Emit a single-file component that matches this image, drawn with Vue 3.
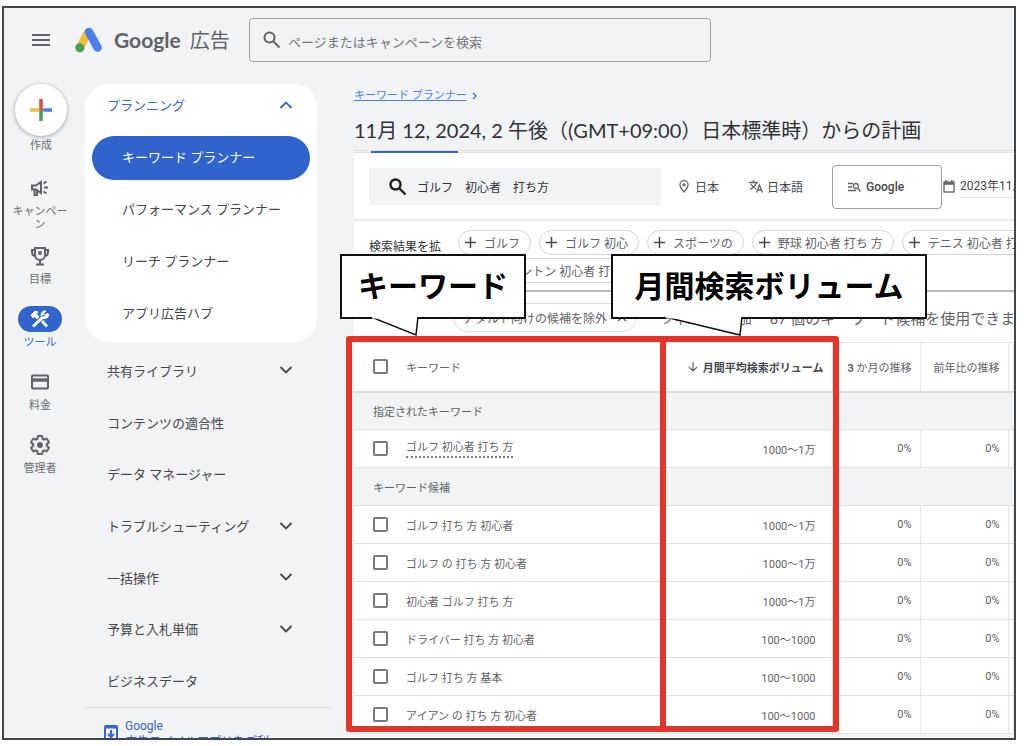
<script setup>
const rail = [
  { id: 'campaign', label: 'キャンペーン' },
  { id: 'goal', label: '目標' },
  { id: 'tools', label: 'ツール', active: true },
  { id: 'billing', label: '料金' },
  { id: 'admin', label: '管理者' },
]
const planning = ['キーワード プランナー', 'パフォーマンス プランナー', 'リーチ プランナー', 'アプリ広告ハブ']
const sections = [
  { label: '共有ライブラリ', more: true },
  { label: 'コンテンツの適合性' },
  { label: 'データ マネージャー' },
  { label: 'トラブルシューティング', more: true },
  { label: '一括操作', more: true },
  { label: '予算と入札単価', more: true },
  { label: 'ビジネスデータ' },
]
const chips = ['ゴルフ', 'ゴルフ 初心', 'スポーツの', '野球 初心者 打ち 方', 'テニス 初心者 打ち 方']
const rows = [
  { section: '指定されたキーワード' },
  { keyword: 'ゴルフ 初心者 打ち 方', volume: '1000～1万', given: true },
  { section: 'キーワード候補' },
  { keyword: 'ゴルフ 打ち 方 初心者', volume: '1000～1万' },
  { keyword: 'ゴルフ の 打ち 方 初心者', volume: '1000～1万' },
  { keyword: '初心者 ゴルフ 打ち 方', volume: '1000～1万' },
  { keyword: 'ドライバー 打ち 方 初心者', volume: '100～1000' },
  { keyword: 'ゴルフ 打ち 方 基本', volume: '100～1000' },
  { keyword: 'アイアン の 打ち 方 初心者', volume: '100～1000' },
]
</script>

<template>
  <div class="page">
    <div class="frame">
      <header class="top">
        <button class="plain menu" aria-label="メニュー">
          <svg width="18" height="14" viewBox="0 0 18 14"><path d="M0 2h18M0 7h18M0 12h18" stroke="#5f6368" stroke-width="2" /></svg>
        </button>
        <svg class="logo" width="28" height="26" viewBox="0 0 28 26" fill="none" stroke-linecap="round">
          <path d="M5 20.500L12.500 6" stroke="#f5bc2f" stroke-width="8" />
          <path d="M14 5l8.500 15.500" stroke="#4a80ee" stroke-width="8.500" />
          <circle cx="4.800" cy="20.800" r="4.600" fill="#4a9f56" />
        </svg>
        <span class="brand"><b>Google</b> 広告</span>
        <label class="site-search">
          <svg width="18" height="18" viewBox="0 0 18 18" fill="none" stroke="#5f6368" stroke-width="2"><circle cx="6.500" cy="6.500" r="5" /><path d="M10.500 10.500l6 6" /></svg>
          <input type="text" placeholder="ページまたはキャンペーンを検索" aria-label="ページまたはキャンペーンを検索" />
        </label>
      </header>

      <div class="body">
        <nav class="rail" aria-label="メイン">
          <button class="plain create">
            <span class="fab">
              <svg width="22" height="22" viewBox="0 0 22 22" fill="none" stroke-width="3.500"><path d="M0 11h9.500" stroke="#f2bd42" /><path d="M12.500 11H22" stroke="#4a80ee" /><path d="M11 11v11" stroke="#4a9f56" /><path d="M11 0v12" stroke="#d94f45" /></svg>
            </span>
            作成
          </button>
          <button v-for="r in rail" :key="r.id" class="plain rail-item" :class="{ active: r.active, tall: r.id === 'campaign' }">
            <span class="rail-icon">
              <svg v-if="r.id === 'campaign'" width="20" height="18" viewBox="0 0 20 18" fill="none" stroke="#5f6368" stroke-width="2"><path d="M2 6.500h4l5-3.500v11l-5-3.500H2zM4.500 11v5h2.500v-5" /><path d="M14 8.500h4M13.500 4.500l3-2M13.500 12.500l3 2" /></svg>
              <svg v-else-if="r.id === 'goal'" width="20" height="20" viewBox="0 0 20 20" fill="none" stroke="#5f6368" stroke-width="2"><path d="M5 2h10v7a5 5 0 0 1-10 0zM5 4H2v2q0 4 3.500 4M15 4h3v2q0 4-3.500 4M10 14v4M6 18.500h8" /><circle cx="10" cy="7" r="1" /></svg>
              <svg v-else-if="r.id === 'tools'" width="20" height="20" viewBox="0 0 20 20" fill="none" stroke="#fff"><path d="M3 17.500L13 8" stroke-width="3" /><path d="M18 4l-2.800 2.700-2-2L16 2a4 4 0 0 0-4.800 5" fill="#fff" stroke-width="1" /><path d="M12 8.500q4.500 1.500 6.500-3.500" stroke-width="2.500" /><path d="M12 12l5 5.500" stroke-width="3" /><path d="M1 6l4-4 3 1-1.500 2L9 8 7 10 4.500 7.500 3 9z" fill="#fff" stroke-width="1" /></svg>
              <svg v-else-if="r.id === 'billing'" width="20" height="16" viewBox="0 0 20 16" fill="none" stroke="#5f6368" stroke-width="2"><rect x="2" y="1.500" width="16" height="13" rx="1" /><path d="M2 6h16" stroke-width="3.500" /></svg>
              <svg v-else width="20" height="20" viewBox="1 1 22 22" fill="none" stroke="#5f6368" stroke-width="2.200"><path d="M19.430 12.980c.04-.32.070-.64.070-.98s-.03-.66-.07-.98l2.110-1.650c.19-.15.240-.42.120-.64l-2-3.460c-.12-.22-.39-.3-.61-.22l-2.490 1c-.52-.4-1.080-.73-1.690-.98l-.38-2.650C14.460 2.180 14.250 2 14 2h-4c-.25 0-.46.180-.49.420l-.38 2.650c-.61.250-1.170.59-1.690.98l-2.490-1c-.23-.09-.49 0-.61.220l-2 3.460c-.13.220-.07.490.12.640l2.110 1.650c-.04.320-.07.650-.07.980s.03.660.070.980l-2.110 1.650c-.19.150-.24.420-.12.640l2 3.460c.12.220.39.300.61.220l2.490-1c.52.400 1.080.730 1.690.980l.38 2.650c.03.240.240.420.490.420h4c.25 0 .46-.18.490-.42l.38-2.650c.61-.25 1.170-.59 1.690-.98l2.490 1c.23.090.490 0 .61-.22l2-3.460c.12-.22.070-.49-.12-.64z" /><circle cx="12" cy="12" r="3.200" fill="#5f6368" stroke="none" /></svg>
            </span>
            {{ r.label }}
          </button>
        </nav>

        <nav class="side" aria-label="ツール">
          <div class="card">
            <button class="plain card-head">プランニング
              <svg width="14" height="8" viewBox="0 0 14 8" fill="none" stroke="#3367d6" stroke-width="1.800"><path d="M1.500 7L7 1.500 12.500 7" /></svg>
            </button>
            <a v-for="(p, i) in planning" :key="p" href="#" class="sub" :class="{ current: i === 0 }">{{ p }}</a>
          </div>
          <button v-for="s in sections" :key="s.label" class="plain section-item">{{ s.label }}
            <svg v-if="s.more" width="14" height="8" viewBox="0 0 14 8" fill="none" stroke="#44474b" stroke-width="1.800"><path d="M1.500 1L7 6.500 12.500 1" /></svg>
          </button>
          <a href="#" class="app-link">
            <svg width="14" height="20" viewBox="0 0 14 20" fill="none" stroke="#3367d6" stroke-width="2"><rect x="1" y="1" width="12" height="18" rx="1" /><path d="M1 2h12" stroke-width="3" /><path d="M7 5v7M4 9l3 3 3-3" /></svg>
            <span>Google<br />広告モバイルアプリをご利</span>
          </a>
        </nav>

        <main class="main">
          <div class="crumb"><a href="#">キーワード プランナー</a>
            <svg width="6" height="8" viewBox="0 0 6 8" fill="none" stroke="#3367d6" stroke-width="1.300"><path d="M1 1l3 3-3 3" /></svg>
          </div>
          <h1>11月 12, 2024, 2 午後（(GMT+09:00）日本標準時）からの計画</h1>
          <div class="tabs"><span></span></div>

          <div class="filters">
            <label class="kw-search">
              <svg width="18" height="18" viewBox="0 0 18 18" fill="none" stroke="#202124" stroke-width="2.400"><circle cx="6.500" cy="6.500" r="5" /><path d="M10.500 10.500l6 6" /></svg>
              <input type="text" value="ゴルフ　初心者　打ち方" aria-label="キーワード" />
            </label>
            <button class="plain filter loc"><svg width="10" height="13" viewBox="0 0 10 13" fill="none" stroke="#5f6368" stroke-width="1.300"><path d="M5 12Q1 7.500 1 4.700a4 4 0 0 1 8 0Q9 7.500 5 12z" /><circle cx="5" cy="4.800" r="1" /></svg>日本</button>
            <button class="plain filter lang"><svg width="14" height="13" viewBox="0 0 14 13" fill="none" stroke="#5f6368" stroke-width="1.300"><path d="M0 2.500h9M4.500 0v2.500M7.500 2.500Q6 7 1 9.500M2 4q1.500 3.500 5 5M7.500 12.500L10.500 5l3 7.500M8.500 10h4" /></svg>日本語</button>
            <button class="network"><svg width="13" height="10" viewBox="0 0 13 10" fill="none" stroke="#5f6368" stroke-width="1.300"><path d="M0 1.500h5M0 5h4M0 8.500h8M9.500 6l3 3.500" /><circle cx="7.800" cy="4" r="2.500" /></svg>Google</button>
            <button class="plain filter date"><svg width="12" height="13" viewBox="0 0 12 13" fill="none" stroke="#5f6368" stroke-width="1.300"><rect x="1" y="2" width="10" height="10" /><path d="M1 3.500h10" stroke-width="2.500" /><path d="M3 0v2M9 0v2" /></svg><span>2023年11月</span></button>
          </div>

          <div class="expand">
            <span class="expand-label">検索結果を拡</span>
            <div class="chips">
              <div class="chip-row">
                <button v-for="c in chips" :key="c" class="chip"><svg width="11" height="11" viewBox="0 0 11 11" stroke="#44474b" stroke-width="1.500"><path d="M5.500 0v11M0 5.500h11" /></svg>{{ c }}</button>
              </div>
              <div class="chip-row">
                <button class="chip"><svg width="11" height="11" viewBox="0 0 11 11" stroke="#44474b" stroke-width="1.500"><path d="M5.500 0v11M0 5.500h11" /></svg>バドミントン 初心者 打ち 方</button>
              </div>
            </div>
          </div>

          <div class="toolbar">
            <button class="exclude">アダルト向けの候補を除外 <svg width="10" height="10" viewBox="0 0 10 10" stroke="#5f6368" stroke-width="1.500"><path d="M1 1l8 8M9 1l-8 8" /></svg></button>
            <span class="more">フィルタを追加</span>
            <span class="count">87 個のキーワード候補を使用できます</span>
          </div>

          <table class="grid">
            <colgroup><col class="c-kw" /><col class="c-vol" /><col class="c-pct" /><col class="c-pct" /><col /></colgroup>
            <thead>
              <tr>
                <th><label class="pick"><input type="checkbox" />キーワード</label></th>
                <th class="num sorted"><svg width="10" height="10" viewBox="0 0 10 10" fill="none" stroke="#5f6368" stroke-width="1.200"><path d="M5 0v9M1 5l4 4 4-4" /></svg>月間平均検索ボリューム</th>
                <th class="num"><b>3</b> か月の推移</th>
                <th class="num">前年比の推移</th>
                <th></th>
              </tr>
            </thead>
            <tbody>
              <tr v-for="(r, i) in rows" :key="i" :class="{ group: r.section }">
                <td v-if="r.section" colspan="5">{{ r.section }}</td>
                <template v-else>
                  <td><label class="pick"><input type="checkbox" /><span :class="{ given: r.given }">{{ r.keyword }}</span></label></td>
                  <td class="num vol">{{ r.volume }}</td>
                  <td class="num">0%</td>
                  <td class="num">0%</td>
                  <td></td>
                </template>
              </tr>
            </tbody>
          </table>

          <div class="mark mark-kw"></div>
          <div class="mark mark-vol"></div>
          <div class="callout callout-kw">キーワード
            <svg width="50" height="20" viewBox="0 0 50 20"><path d="M0 0L45 18 47 0" fill="#fff" stroke="#111" stroke-width="1.500" /><path d="M1 0h45" stroke="#fff" stroke-width="3" /></svg>
          </div>
          <div class="callout callout-vol">月間検索ボリューム
            <svg width="80" height="20" viewBox="0 0 80 20"><path d="M0 0L75 18 77 0" fill="#fff" stroke="#111" stroke-width="1.500" /><path d="M1 0h75" stroke="#fff" stroke-width="3" /></svg>
          </div>
        </main>
      </div>
    </div>
  </div>
</template>

<style>
body { background: #fff; }
</style>

<style scoped>
* { box-sizing: border-box; }
.page {
  height: 100vh;
  padding: 6px 8px 6px 2px;
  font-family: Roboto, "Noto Sans CJK JP", sans-serif;
  font-size: 12px;
  color: #44474b;
}
button, input { font: inherit; color: inherit; }
svg { flex: none; }
.plain { border: 0; padding: 0; background: none; }
.frame {
  height: 100%;
  border: 2px solid #44474a;
  background: #f1f3f4;
  overflow: hidden;
  display: flex;
  flex-direction: column;
}
.top { flex: none; height: 76px; padding: 10px 0 0 28px; display: flex; align-items: flex-start; }
.menu { height: 44px; display: flex; align-items: center; }
.logo { margin: 9px 11px 0 25px; }
.brand { flex: none; width: 135px; line-height: 44px; font-size: 20px; color: #5f6368; white-space: nowrap; }
.brand b { margin-right: 4px; font-family: Lato, sans-serif; font-size: 21px; font-weight: 700; }
.site-search {
  width: 47%;
  height: 44px;
  border: 1px solid #9aa0a6;
  border-radius: 4px;
  padding: 0 12px 0 13px;
  display: flex;
  align-items: center;
  gap: 7px;
}
.site-search input { flex: 1; border: 0; background: none; padding: 4px 0 0; font-size: 13px; outline: 0; }
.site-search input::placeholder { color: #72767a; opacity: 1; }

.body { flex: 1; min-height: 0; display: flex; }
.rail { flex: none; width: 72px; display: flex; flex-direction: column; align-items: center; font-size: 11px; color: #6b6f73; }
.create { display: flex; flex-direction: column; align-items: center; height: 91px; line-height: 20px; padding-left: 2px; }
.fab { width: 52px; height: 52px; border-radius: 50%; background: #fff; box-shadow: 0 1px 4px #0005; display: grid; place-items: center; }
.rail-item { height: 63px; width: 60px; line-height: 13px; display: flex; flex-direction: column; align-items: center; gap: 4px; }
.rail-item.tall { height: 68px; }
.rail-icon { width: 44px; height: 26px; border-radius: 13px; display: grid; place-items: center; }
.active { color: #3367d6; }
.active .rail-icon { background: #3063cb; }

.side { flex: none; width: 246px; margin-left: 9px; display: flex; flex-direction: column; }
.card { flex: none; width: 232px; height: 258px; background: #fff; border-radius: 24px; padding: 0 7px 8px; margin-bottom: 3px; }
.card-head { width: 100%; height: 44px; padding: 0 17px 3px 15px; display: flex; align-items: center; justify-content: space-between; color: #3367d6; font-size: 13px; }
.sub { display: flex; align-items: center; height: 44px; margin: 8px 0; padding: 0 0 4px 30px; border-radius: 22px; color: #44474b; font-size: 13px; text-decoration: none; }
.sub.current { background: #3063cb; color: #fff; }
.section-item { flex: 1; width: 232px; padding: 0 24px 1px 22px; display: flex; align-items: center; justify-content: space-between; font-size: 13px; }
.app-link { flex: none; height: 31px; border-top: 1px solid #dadce0; padding: 10px 0 0 19px; display: flex; align-items: flex-start; gap: 7px; color: #3367d6; line-height: 16px; text-decoration: none; white-space: nowrap; }
.app-link svg { margin-top: 7px; }

.main { position: relative; flex: 1; min-width: 0; margin-left: 23px; }
.crumb { height: 24px; line-height: 24px; font-size: 11px; display: flex; align-items: center; gap: 5px; }
.crumb a { color: #4a80ee; }
h1 { margin: 7px 0 0; height: 35px; line-height: 30px; font-family: Lato, "Noto Sans CJK JP", sans-serif; font-size: 20px; font-weight: 400; color: #303236; white-space: nowrap; }
.tabs { height: 3px; border-top: 1px solid #dfe1e3; border-bottom: 1px solid #dfe1e3; padding-left: 17px; }
.tabs span { display: block; width: 87px; height: 3px; background: #3367d6; }
.filters { height: 68px; background: #fff; border-bottom: 2px solid #e8eaed; padding: 1px 0 0 15px; display: flex; align-items: center; overflow: hidden; white-space: nowrap; }
.kw-search { flex: none; width: 292px; height: 37px; background: #f1f3f4; padding-left: 20px; display: flex; align-items: center; gap: 10px; }
.kw-search input { flex: 1; min-width: 0; border: 0; padding: 0; background: none; color: #303236; outline: 0; }
.filter { flex: none; display: flex; align-items: center; gap: 6px; }
.loc { margin-left: 18px; }
.lang { margin-left: 30px; gap: 4px; }
.network { flex: none; width: 110px; height: 44px; margin-left: 29px; border: 1px solid #9aa0a6; border-radius: 4px; background: #fff; padding: 0 15px; display: flex; align-items: center; gap: 5px; font-weight: 500; }
.date { margin-left: 1px; gap: 5px; }
.date span { border-bottom: 1px solid #dadce0; line-height: 22px; }
.expand { height: 71px; background: #fff; border-bottom: 2px solid #b4b7ba; padding: 9px 0 0 15px; display: flex; overflow: hidden; }
.expand-label { flex: none; width: 89px; line-height: 34px; color: #303236; }
.chips { display: flex; flex-direction: column; gap: 3px; }
.chip-row { display: flex; gap: 8px; }
.chip { flex: none; height: 25px; border: 1px solid #d2d4d7; border-radius: 13px; background: #fff; padding: 0 10px 0 6px; display: flex; align-items: center; gap: 8px; color: #5f6368; white-space: nowrap; }
.toolbar { height: 50px; background: #fff; padding: 0 0 0 99px; display: flex; align-items: center; overflow: hidden; white-space: nowrap; color: #5f6368; }
.exclude { flex: none; height: 29px; border: 1px solid #dadce0; border-radius: 15px; padding: 0 9px; background: #fff; display: flex; align-items: center; gap: 10px; }
.more { flex: none; margin-left: 24px; font-size: 13px; }
.count { flex: none; margin-left: 18px; font-size: 15px; }

.grid { width: 100%; table-layout: fixed; border-collapse: collapse; background: #fff; font-size: 11px; color: #5f6368; border-top: 1px solid #e4e6e8; }
.c-kw { width: 306px; }
.c-vol { width: 172px; }
.c-pct { width: 88px; }
th, td { height: 38px; padding: 0 8px; font-weight: 400; text-align: left; border-bottom: 1px solid #e0e2e4; border-right: 1px solid #e4e6e8; white-space: nowrap; }
th { height: 49px; border-bottom: 2px solid #dcdee0; }
th:first-child, td:first-child { padding-left: 19px; }
td.vol { padding: 0 16px 0 8px; }
.num { text-align: right; }
.sorted { font-weight: 700; color: #44474b; }
.sorted svg { margin-right: 5px; }
.group td { background: #f1f3f4; border-right: 0; }
.pick { display: flex; align-items: center; gap: 18px; }
.pick input { appearance: none; width: 15px; height: 15px; margin: 0; border: 2px solid #77797c; border-radius: 2px; background: #fff; }
.given { border-bottom: 2px dotted #77797c; line-height: 16px; }

.mark { position: absolute; top: 252px; height: 396px; border: 6px solid #e53528; border-radius: 3px; }
.mark-kw { left: -8px; width: 320px; }
.mark-vol { left: 306px; width: 179px; }
.callout { position: absolute; top: 170px; height: 65px; border: 2px solid #111; background: #fff; color: #000; font-size: 30px; line-height: 61px; font-weight: 700; text-align: center; white-space: nowrap; }
.callout svg { position: absolute; top: 61px; }
.callout-kw { left: -14px; width: 186px; }
.callout-kw svg { left: 29px; }
.callout-vol { left: 257px; width: 316px; }
.callout-vol svg { left: 52px; }
</style>
